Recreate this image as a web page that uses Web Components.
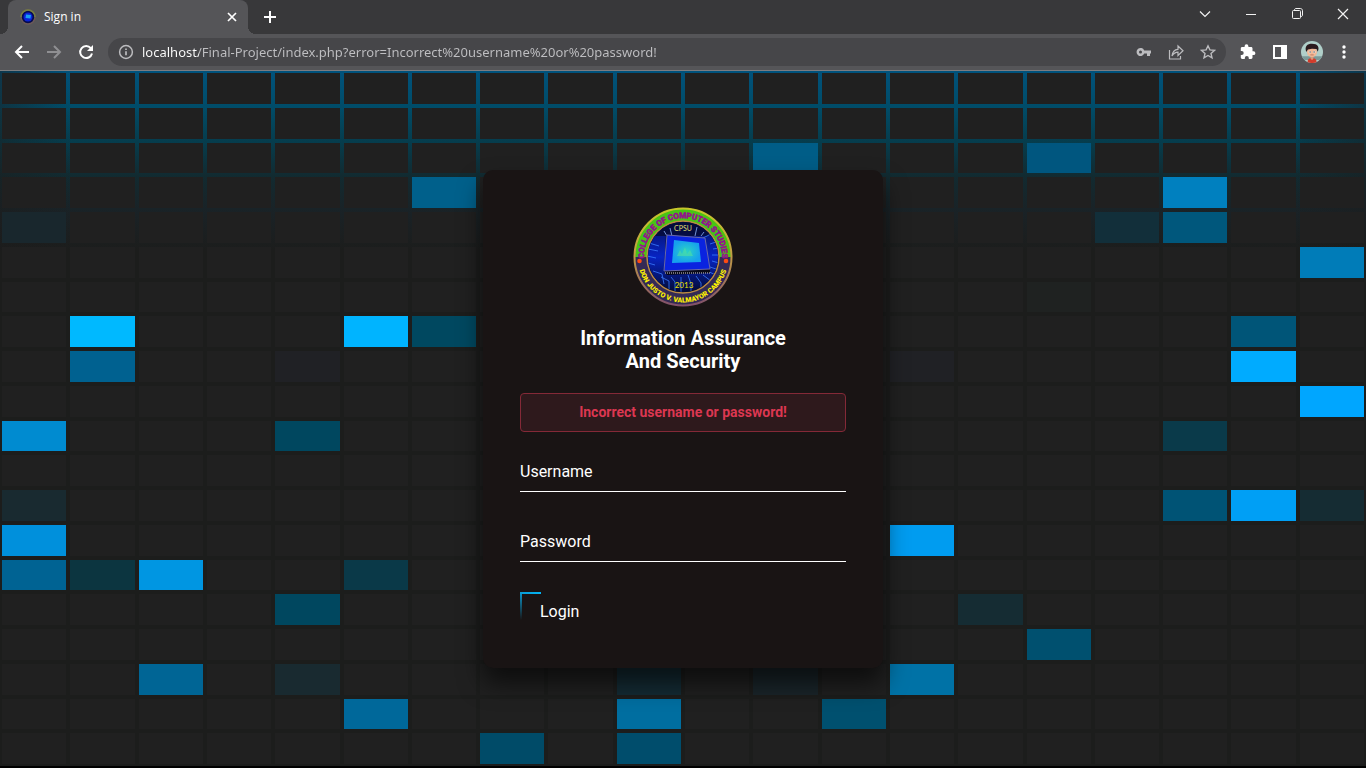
<!DOCTYPE html>
<html lang="en">
<head>
<meta charset="utf-8">
<title>Sign in</title>
<style>
  html { height: 100%; }
  body {
    margin: 0;
    min-height: 100%;
    display: flex;
    flex-direction: column;
    background: #000;
    font-family: Roboto, "Liberation Sans", sans-serif;
    color: #fff;
  }
</style>
</head>
<body>
<browser-frame>
  <browser-tab slot="tab">Sign in</browser-tab>
  <address-bar slot="address" value="localhost/Final-Project/index.php?error=Incorrect%20username%20or%20password!"></address-bar>
</browser-frame>
<tile-stage>
  <sign-in-card>
    <college-seal slot="logo"></college-seal>
    <span slot="title">Information Assurance<br>And Security</span>
    <alert-note>Incorrect username or password!</alert-note>
    <text-field name="uname" type="text">Username</text-field>
    <text-field name="password" type="password">Password</text-field>
    <glow-button>Login</glow-button>
  </sign-in-card>
</tile-stage>

<script>
const define = (name, html, setup) => {
  const template = document.createElement('template');
  template.innerHTML = html;
  customElements.define(name, class extends HTMLElement {
    constructor() {
      super();
      this.attachShadow({ mode: 'open' }).append(template.content.cloneNode(true));
    }
    connectedCallback() {
      if (setup && !this.ready) {
        this.ready = true;
        setup(this, this.shadowRoot);
      }
    }
  });
};

/* Icons */
const icons = {
  back: '<path d="M15 8H2M8 2L2 8l6 6" stroke-width="2"/>',
  forward: '<path d="M1 8h13M8 2l6 6-6 6" stroke-width="2"/>',
  reload: '<path d="M12.800 4.200A6 6 0 1 0 14 9.500" stroke-width="2"/><path d="M15 1v6H9z" fill="currentColor" stroke="none"/>',
  info: '<circle cx="8" cy="8" r="6.400" stroke-width="1.500"/><path d="M8 7.200v4M8 4.500v1.600" stroke-width="1.700"/>',
  key: '<path fill="currentColor" stroke="none" fill-rule="evenodd" d="M8.200 6.400A4 4 0 1 0 8.200 9.600H11V12h3V9.600h1V6.400zM4.500 6.500a1.500 1.500 0 1 1 0 3 1.500 1.500 0 0 1 0-3z"/>',
  share: '<path d="M1.500 6v9h11v-3M4 12c.500-4.500 3-6.500 6-6.700V2l5 4.800-5 4.700V8.200C7.500 8.200 5.500 9.500 4 12z" stroke-width="1.200"/>',
  star: '<path d="M8 1.800l1.900 4.100 4.500.5-3.400 3 1 4.400L8 11.500l-4 2.300 1-4.400-3.400-3 4.500-.5z" stroke-width="1.400"/>',
  puzzle: '<path fill="currentColor" stroke="none" d="M13.500 7.300h-1V4.400c0-.800-.600-1.400-1.400-1.400H8.400V2.200a1.900 1.900 0 0 0-3.800 0V3H2.200C1.400 3 .8 3.600.8 4.400v2.700h.900a2 2 0 0 1 0 4H.8v2.500c0 .8.600 1.400 1.400 1.400h2.600v-.900a2 2 0 0 1 4 0v.9h2.300c.8 0 1.400-.6 1.400-1.400v-2.500h1a1.900 1.900 0 0 0 0-3.800z"/>',
  panel: '<path fill="currentColor" stroke="none" fill-rule="evenodd" d="M1 1h14v14H1zM3 3v10h6V3z"/>',
  dots: '<g fill="currentColor" stroke="none"><circle cx="8" cy="3" r="1.700"/><circle cx="8" cy="8" r="1.700"/><circle cx="8" cy="13" r="1.700"/></g>',
  chevron: '<path d="M3 5.500l5 5 5-5" stroke-width="1.200"/>',
  minimise: '<path d="M3 8.500h10" stroke-width="1"/>',
  restore: '<path d="M5.500 4.500V4c0-.800.500-1.500 1.500-1.500h4.500c1 0 2 1 2 2V9c0 1-.700 1.500-1.500 1.500h-.500" stroke-width="1"/><rect x="3.500" y="4.500" width="8" height="8" rx="1" stroke-width="1"/>',
  close: '<path d="M3 3l10 10M13 3L3 13" stroke-width="1.200"/>',
  closeTab: '<path d="M4 4l8 8M12 4l-8 8" stroke-width="1.700"/>',
  plus: '<path d="M8 2v12M2 8h12" stroke-width="2"/>',
  avatar: '<g stroke="none"><circle cx="8" cy="8" r="8" fill="#b0cfc9"/><path d="M0.600 11h14.800a8 8 0 0 1-2 2.900h-10.800A8 8 0 0 1 .6 11z" fill="#7c9a98"/><path d="M4.800 15.300c0-2.500 1.500-3 3.200-3s3.300.5 3.300 3A8 8 0 0 1 4.800 15.300z" fill="#d23c2c"/><path d="M7 10.500h2v2.500l-1 .800-1-.800z" fill="#d79a79"/><ellipse cx="8" cy="8.200" rx="3.600" ry="3.500" fill="#f0b896"/><path d="M3.900 8C2.300 3.900 4.600 2 8 2c4.200 0 5.700 2.500 4.200 5.800L11.300 5.800 8 5.600 5 6.200z" fill="#2b1a1d"/><circle cx="6.500" cy="8" r=".9" fill="#fff"/><circle cx="9.600" cy="8" r=".9" fill="#fff"/><circle cx="6.600" cy="8" r=".5" fill="#222"/><circle cx="9.500" cy="8" r=".5" fill="#222"/><path d="M6.800 10.100h2.400" stroke="#9b4a3a" stroke-width=".4"/></g>'
};

define('line-icon', `
  <style>
    :host { display: block; width: 16px; height: 16px; }
    svg { display: block; width: 100%; height: 100%; }
  </style>
  <svg viewBox="0 0 16 16" fill="none" stroke="currentColor" aria-hidden="true"></svg>`,
  (host, root) => { root.querySelector('svg').innerHTML = icons[host.getAttribute('name')]; });

define('icon-button', `
  <style>
    :host { display: flex; width: 32px; }
    button {
      flex: 1; display: flex; align-items: center; justify-content: center;
      padding: 0; border: 0; background: none; color: inherit;
    }
    :host([name="avatar"]) line-icon { width: 22px; height: 22px; }
  </style>
  <button type="button"></button>`,
  (host, root) => {
    const button = root.querySelector('button');
    const icon = document.createElement('line-icon');
    icon.setAttribute('name', host.getAttribute('name'));
    button.setAttribute('aria-label', host.getAttribute('label'));
    button.append(icon);
  });

/* Browser window */
define('browser-frame', `
  <style>
    :host { display: block; background: #555558; border-bottom: 1px solid #7d7d80; }
    .strip { display: flex; height: 34px; background: #38383a; padding-left: 8px; }
    .new { margin-left: 6px; }
    .window { display: flex; margin-left: auto; padding-bottom: 6px; color: #f2f2f2; }
    .window icon-button { width: 46px; }
    .bar { display: flex; height: 36px; padding: 0 6px; }
    ::slotted([slot="address"]) { flex: 1; margin: 4px 6px; }
    .dim { color: #8f8f92; }
  </style>
  <div class="strip">
    <slot name="tab"></slot>
    <icon-button class="new" name="plus" label="New tab"></icon-button>
    <div class="window">
      <icon-button name="chevron" label="Search tabs"></icon-button>
      <icon-button name="minimise" label="Minimise"></icon-button>
      <icon-button name="restore" label="Restore"></icon-button>
      <icon-button name="close" label="Close"></icon-button>
    </div>
  </div>
  <div class="bar">
    <icon-button name="back" label="Back"></icon-button>
    <icon-button class="dim" name="forward" label="Forward"></icon-button>
    <icon-button name="reload" label="Reload"></icon-button>
    <slot name="address"></slot>
    <icon-button name="puzzle" label="Extensions"></icon-button>
    <icon-button name="panel" label="Side panel"></icon-button>
    <icon-button name="avatar" label="Profile"></icon-button>
    <icon-button name="dots" label="Menu"></icon-button>
  </div>`);

define('browser-tab', `
  <style>
    :host {
      position: relative; display: flex; align-items: center; gap: 8px;
      box-sizing: border-box; width: 240px; padding: 0 8px 0 12px;
      border-radius: 8px 8px 0 0; background: #555558;
      font: 12px/16px "Open Sans", "Noto Sans", sans-serif;
    }
    :host::before, :host::after {
      content: ""; position: absolute; bottom: 0; width: 8px; height: 8px;
    }
    :host::before { right: 100%; background: radial-gradient(circle at 0 0, transparent 8px, #555558 8px); }
    :host::after { left: 100%; background: radial-gradient(circle at 100% 0, transparent 8px, #555558 8px); }
    .favicon { width: 16px; height: 16px; }
    .name { flex: 1; }
    icon-button { width: 16px; }
  </style>
  <svg class="favicon" viewBox="0 0 16 16" aria-hidden="true">
    <circle cx="8" cy="8" r="7" fill="#060c50" stroke="#6d5b58" stroke-width="1.500"/>
    <path d="M1 8a7 7 0 0 1 14 0" fill="none" stroke="#77803e" stroke-width="1.500"/>
    <circle cx="8" cy="8" r="4.500" fill="#0a22d8"/>
    <path d="M6 5.500l5 .5-.5 3.500-5-.5z" fill="#1b9ef0"/>
  </svg>
  <span class="name"><slot></slot></span>
  <icon-button name="closeTab" label="Close tab"></icon-button>`);

define('address-bar', `
  <style>
    :host {
      display: flex; align-items: center; height: 28px; min-width: 0;
      padding: 0 2px 0 10px; box-sizing: border-box;
      border-radius: 14px; background: #464649; color: #bcbcbf;
    }
    input {
      flex: 1; min-width: 0; margin-left: 8px; padding: 0; border: 0; outline: 0; height: 20px;
      font: 13px/20px "Noto Sans", "Open Sans", sans-serif;
      background: linear-gradient(90deg, #fff 57px, #bfbfc2 57px);
      -webkit-background-clip: text; background-clip: text;
      -webkit-text-fill-color: transparent; color: #bfbfc2;
    }
  </style>
  <line-icon name="info"></line-icon>
  <input type="text" aria-label="Address" spellcheck="false">
  <icon-button name="key" label="Saved passwords"></icon-button>
  <icon-button name="share" label="Share"></icon-button>
  <icon-button name="star" label="Bookmark"></icon-button>`,
  (host, root) => { root.querySelector('input').value = host.getAttribute('value'); });

/* Lit tiles as "row-column": colour, counted from zero */
const lit = {
  '2-11': '#005d87', '2-15': '#00567f',
  '3-6': '#00608b', '3-17': '#0080bf',
  '4-0': '#19272d', '4-16': '#122f3a', '4-17': '#00577c',
  '5-19': '#007cb8', '6-15': '#1f2221',
  '7-1': '#00b9ff', '7-5': '#00b4ff', '7-6': '#004860', '7-18': '#005578',
  '8-1': '#006190', '8-4': '#202125', '8-13': '#202125', '8-18': '#00abff',
  '9-19': '#00a6ff',
  '10-0': '#008bd0', '10-4': '#00475f', '10-17': '#0a3a4a',
  '12-0': '#192a30', '12-17': '#005375', '12-18': '#009ff5', '12-19': '#152c33',
  '13-0': '#0090dc', '13-13': '#009cf0',
  '14-0': '#006393', '14-1': '#0c3540', '14-2': '#0096e2', '14-5': '#0a3948',
  '15-4': '#00475f', '15-14': '#152c33',
  '16-15': '#00506f',
  '17-2': '#006595', '17-4': '#192a30', '17-9': '#142b34', '17-11': '#1a252a', '17-13': '#0072a6',
  '18-5': '#00689a', '18-9': '#006ea0', '18-12': '#00506f',
  '19-7': '#004b68', '19-9': '#004d6c'
};

define('tile-stage', `
  <style>
    :host { flex: 1; display: grid; margin-bottom: 2px; }
    .tiles, .content { grid-area: 1 / 1; }
    .tiles {
      display: grid; grid-template: repeat(20, 1fr) / repeat(20, 1fr);
      gap: 4px; padding: 2px;
      background:
        linear-gradient(90deg, rgba(28,28,28,.5), rgba(28,28,28,0) 72px, rgba(28,28,28,0) calc(100% - 72px), rgba(28,28,28,.5)) 0 0 / 100% 180px no-repeat,
        linear-gradient(#00527c, #004c68 36px, #063c4c 72px, #122a30 106px, #1a2226 142px, #1c1d1c 180px);
    }
    i { background: #202020; }
    .content { display: flex; align-items: center; justify-content: center; }
  </style>
  <div class="tiles" aria-hidden="true"></div>
  <div class="content"><slot></slot></div>`,
  (host, root) => {
    const tiles = root.querySelector('.tiles');
    for (let n = 0; n < 400; n++) {
      const tile = document.createElement('i');
      const colour = lit[Math.floor(n / 20) + '-' + n % 20];
      if (colour) tile.style.background = colour;
      tiles.append(tile);
    }
  });

/* Sign-in card */
define('sign-in-card', `
  <style>
    :host {
      display: block; box-sizing: border-box; width: 400px; max-width: 100%; padding: 37px;
      border-radius: 10px; background: #191414; box-shadow: 0 15px 25px rgba(0,0,0,.6);
    }
    ::slotted([slot="logo"]) { margin: 0 auto 20px; }
    h1 { margin: 0 0 20px; font-size: 20px; line-height: 23px; text-align: center; }
  </style>
  <form>
    <slot name="logo"></slot>
    <h1><slot name="title"></slot></h1>
    <slot></slot>
  </form>`);

define('college-seal', `
  <style>
    :host { display: block; width: 100px; height: 100px; }
    svg { display: block; width: 100%; height: 100%; }
    text { text-anchor: middle; }
  </style>
  <svg viewBox="0 0 100 100" role="img" aria-label="College of Computer Studies seal">
    <defs>
      <path id="upper" d="M11.600 57A39 39 0 1 1 88.400 57"/>
      <path id="lower" d="M4.500 50A45.500 45.500 0 0 0 95.500 50"/>
      <clipPath id="inner"><circle cx="50" cy="50" r="35"/></clipPath>
      <linearGradient id="rim" x2="0" y2="1"><stop offset="0" stop-color="#c8c62a"/><stop offset=".5" stop-color="#c09a45"/><stop offset="1" stop-color="#81506a"/></linearGradient>
      <linearGradient id="board" x2="0" y2="1"><stop offset="0" stop-color="#05105c"/><stop offset=".5" stop-color="#0724c4"/><stop offset="1" stop-color="#030a30"/></linearGradient>
      <radialGradient id="die"><stop offset="0" stop-color="#2bd4c4"/><stop offset="1" stop-color="#16a0ee"/></radialGradient>
    </defs>
    <circle cx="50" cy="50" r="49" fill="#342a55"/>
    <path d="M1 50a49 49 0 0 1 98 0z" fill="#48c414"/>
    <circle cx="50" cy="50" r="48.500" fill="none" stroke="url(#rim)" stroke-width="2"/>
    <circle cx="50" cy="50" r="36" fill="#0a0c25" stroke="#b98a45" stroke-width="1.500"/>
    <g clip-path="url(#inner)">
      <path d="M14 14h72v72H14z" fill="url(#board)"/>
      <path d="M14 14h72v15H14z" fill="#05082a" opacity=".7"/>
      <g fill="none" stroke="#3b7bff" stroke-width=".8">
        <path d="M16 36l10 3M15 42l10 2M14 49l9 2M15 56l7 2M68 32l12-6M77 37l9-3M80 42l6-1M79 48h8M79 54l7 2M77 60l9 3M20 64l9 3 2 10M28 70l8 4v12M38 70l4 5v10M48 70v15M55 68l3 9v9M63 69l5 7v6M70 68l8 6M74 64l9 4"/>
        <path d="M31 24l3 5M37 21l2 8M64 20l-2 9M71 25l-3 4" stroke="#8fb4ff"/>
      </g>
      <path d="M33 28l-2 36 3 4 43-2v-4z" fill="#0a0a18"/>
      <path d="M34 28l38 3 5 31-46 2z" fill="#0a23e0" stroke="#6b69a8"/>
      <path d="M41 33l25 3 2 19-29 1z" fill="url(#die)"/>
      <path d="M44 49l3-6 2 4 3-7 2 7 3-4 3 6z" fill="#4fe0a4" opacity=".6"/>
      <path d="M32 66h45" stroke="#9b98a0" stroke-width="2" stroke-dasharray="1 1" opacity=".7"/>
    </g>
    <circle cx="6.500" cy="54" r="2.300" fill="#ff4a12"/>
    <circle cx="93" cy="54" r="2.300" fill="#ff4a12"/>
    <text font-family="Roboto, sans-serif" font-size="8" font-weight="700" fill="#94128e" stroke="#94128e" stroke-width=".6"><textPath href="#upper" startOffset="50%">COLLEGE OF COMPUTER STUDIES</textPath></text>
    <text font-family="Roboto, sans-serif" font-size="7" font-weight="900" fill="#fff200"><textPath href="#lower" startOffset="50%">DON JUSTO V. VALMAYOR CAMPUS</textPath></text>
    <text x="50" y="24" font-family="Lato, sans-serif" font-size="7" fill="#e0dc70">CPSU</text>
    <text x="51" y="81" font-family="Lato, sans-serif" font-size="8" fill="#f0e200">2013</text>
  </svg>`);

define('alert-note', `
  <style>
    :host {
      display: block; padding: 10px; margin-bottom: 20px; border: 1px solid #842937; border-radius: 4px;
      background: #2e191c; color: #dc3751;
      font-size: 14px; line-height: 17px; font-weight: 700; text-align: center;
    }
  </style>
  <div role="alert"><slot></slot></div>`);

define('text-field', `
  <style>
    :host { display: grid; margin-bottom: 30px; font-size: 16px; line-height: 19px; }
    label, input { grid-area: 1 / 1; }
    label { padding: 10px 0; pointer-events: none; }
    input {
      box-sizing: border-box; width: 100%; height: 40px; padding: 10px 0; border: 0; outline: 0;
      border-bottom: 1px solid #fff; border-radius: 0; background: none; color: inherit; font: inherit;
    }
  </style>
  <input id="box">
  <label for="box"><slot></slot></label>`,
  (host, root) => {
    const input = root.querySelector('input');
    input.type = host.getAttribute('type');
    input.name = host.getAttribute('name');
  });

define('glow-button', `
  <style>
    :host { display: flex; }
    button {
      padding: 10px 20px; border: 0; color: inherit; font: inherit; font-size: 16px; line-height: 19px;
      background:
        linear-gradient(90deg, #0a9bd2, #03b4f4) 0 0 / 21px 2px no-repeat,
        linear-gradient(#0a9bd2, rgba(3,169,244,0)) 0 0 / 2px 28px no-repeat;
    }
  </style>
  <button type="submit"><slot></slot></button>`);
</script>
</body>
</html>
